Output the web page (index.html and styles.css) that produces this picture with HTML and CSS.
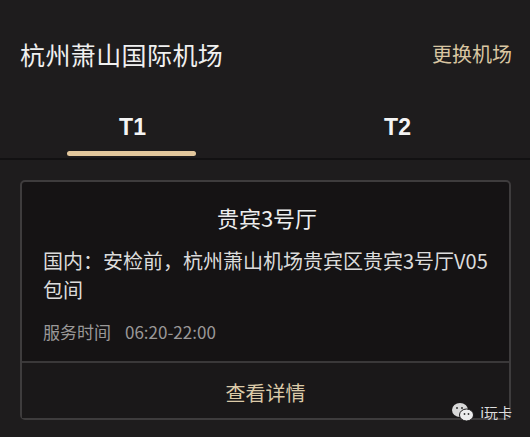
FILE: index.html
```html
<!DOCTYPE html>
<html lang="zh-CN">
<head>
  <meta charset="UTF-8">
  <title>贵宾厅</title>
  <link rel="stylesheet" href="styles.css">
</head>
<body>
  <div class="page">
    <div class="airport-bar">
      <div class="airport-name">杭州萧山国际机场</div>
      <div class="change-link">更换机场</div>
    </div>
    <div class="tabs">
      <div class="tab active">T1</div>
      <div class="tab">T2</div>
    </div>
    <div class="list">
      <div class="card">
        <div class="card-body">
          <div class="card-title">贵宾3号厅</div>
          <div class="card-desc">国内：安检前，杭州萧山机场贵宾区贵宾3号厅V05包间</div>
          <div class="card-time"><span>服务时间</span><span>06:20-22:00</span></div>
        </div>
        <div class="card-foot">查看详情</div>
      </div>
    </div>
    <div class="watermark">
      <svg width="24" height="20" viewBox="0 0 24 20">
        <ellipse cx="9" cy="8" rx="8" ry="7" fill="#d8d8d8"/>
        <ellipse cx="15.5" cy="13" rx="7" ry="6" fill="#ececec" stroke="#1c1a1b" stroke-width="1"/>
        <circle cx="6" cy="6" r="1" fill="#333"/>
        <circle cx="11" cy="6" r="1" fill="#333"/>
        <circle cx="13.5" cy="12" r="0.9" fill="#333"/>
        <circle cx="17.5" cy="12" r="0.9" fill="#333"/>
      </svg>
      <span>i玩卡</span>
    </div>
  </div>
</body>
</html>
```

FILE: styles.css
```css
* {
  margin: 0;
  padding: 0;
  box-sizing: border-box;
}

body {
  width: 530px;
  height: 437px;
  overflow: hidden;
  background: #1e1c1d;
  font-family: "Noto Sans CJK SC", "Liberation Sans", sans-serif;
  color: #e8e8e8;
}

.page {
  position: relative;
  height: 437px;
}

.airport-bar {
  display: flex;
  justify-content: space-between;
  align-items: flex-start;
  height: 100px;
  padding: 38px 18px 0 20px;
  line-height: 32px;
}

.airport-name {
  font-size: 25px;
  color: #f0f0f0;
  letter-spacing: 0.4px;
}

.change-link {
  font-size: 20px;
  color: #d9c6a2;
}

.tabs {
  display: flex;
  height: 60px;
  border-bottom: 2px solid #121112;
}

.tab {
  flex: 1;
  text-align: center;
  font-family: "Liberation Sans", sans-serif;
  font-size: 23px;
  font-weight: bold;
  line-height: 28px;
  padding-top: 13px;
  color: #f4f4f4;
  position: relative;
}

.tab.active::after {
  content: '';
  position: absolute;
  left: 67px;
  width: 129px;
  bottom: 2px;
  height: 5px;
  border-radius: 3px;
  background: #e3c79c;
}

.list {
  padding: 20px 19px 0 20px;
}

.card {
  border: 2px solid #3e3c3d;
  border-radius: 5px;
  background: #151314;
  height: 240px;
  display: flex;
  flex-direction: column;
}

.card-body {
  padding: 21px 18px 0 21px;
  height: 179px;
}

.card-title {
  text-align: center;
  font-size: 22px;
  color: #eeeeee;
  line-height: 29px;
}

.card-desc {
  margin-top: 14px;
  font-size: 20px;
  line-height: 29px;
  color: #dcdcdc;
}

.card-time {
  margin-top: 17px;
  font-size: 17px;
  line-height: 22px;
  color: #9a9898;
  display: flex;
  gap: 14px;
}

.card-foot {
  flex: 1;
  border-top: 2px solid #3a3839;
  background: #1a1819;
  display: flex;
  justify-content: center;
  align-items: center;
  font-size: 20px;
  color: #dccaa8;
  padding-top: 4px;
}

.watermark {
  position: absolute;
  right: 18px;
  top: 402px;
  display: flex;
  align-items: center;
  gap: 5px;
  font-size: 14px;
  line-height: 20px;
  color: #dddddd;
}
```
